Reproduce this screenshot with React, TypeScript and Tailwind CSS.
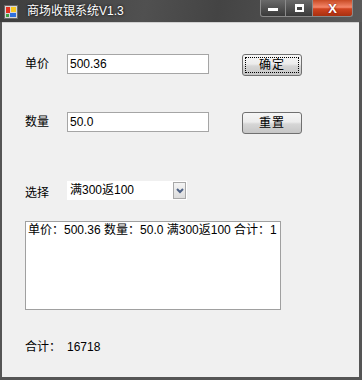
import React from "react";

const font = "font-['Liberation_Sans','Noto_Sans_CJK_SC',sans-serif]";

function AppIcon() {
  return (
    <svg width="14" height="14" viewBox="0 0 14 14">
      <rect x="0.5" y="0.5" width="13" height="13" fill="#d8d8d8" stroke="#6a6a6a" />
      <rect x="2" y="2" width="4" height="6" fill="#e03020" />
      <rect x="7" y="2" width="5" height="5" fill="#f8c820" />
      <rect x="6" y="8" width="6" height="4" fill="#3070e0" />
      <rect x="2" y="9" width="3" height="3" fill="#40a040" />
    </svg>
  );
}

function WinButton({ label, focused }: { label: string; focused?: boolean }) {
  return (
    <button className="relative w-[60px] h-[22px] rounded-[3px] border border-[#707070] bg-[linear-gradient(to_bottom,#f6f6f6_0%,#ececec_45%,#d6d6d6_55%,#c6c6c6_100%)] text-[12px] text-black flex items-center justify-center">
      {focused && (
        <span className="absolute inset-[2px] border border-dotted border-black" />
      )}
      <span className="relative tracking-[1px]">{label}</span>
    </button>
  );
}

function Field({ label, value, btn, focused }: { label: string; value: string; btn: string; focused?: boolean }) {
  return (
    <div className="flex items-start h-[22px]">
      <span className="w-[42px] h-[20px] leading-[20px] text-[12px]">{label}</span>
      <div className="w-[142px] h-[20px] border border-[#a5a5a5] bg-white px-[2px] leading-[18px] text-[12px]">
        {value}
      </div>
      <div className="ml-[33px]">
        <WinButton label={btn} focused={focused} />
      </div>
    </div>
  );
}

export default function App() {
  return (
    <div className={`w-[362px] h-[380px] flex flex-col bg-[#555555] ${font}`}>
      {/* Title bar */}
      <div className="h-[22px] flex items-start bg-[linear-gradient(100deg,#3e3e3e_0%,#505050_40%,#444444_60%,#5a5a5a_100%)]">
        <div className="mt-[5px] ml-[4px]">
          <AppIcon />
        </div>
        <span className="ml-[9px] mt-[4px] text-[12px] leading-[14px] text-white [text-shadow:0_0_3px_#000]">
          商场收银系统V1.3
        </span>
        <div className="ml-auto mr-[9px] flex h-[17px]">
          <div className="w-[26px] h-[17px] border border-[#8a8a8a] border-t-0 rounded-bl-[3px] bg-[linear-gradient(to_bottom,#6a6a6a,#3a3a3a)] flex items-center justify-center">
            <span className="w-[10px] h-[3px] bg-white mt-[2px]" />
          </div>
          <div className="w-[26px] h-[17px] border-b border-[#8a8a8a] bg-[linear-gradient(to_bottom,#6a6a6a,#3a3a3a)] flex items-center justify-center">
            <span className="w-[9px] h-[8px] border-2 border-white border-t-[3px] bg-[#444]" />
          </div>
          <div className="w-[41px] h-[17px] border border-[#8a8a8a] border-t-0 rounded-br-[3px] bg-[linear-gradient(to_bottom,#c84a24_0%,#f5876a_45%,#d04420_55%,#a83010_100%)] flex items-center justify-center">
            <span className="text-white font-bold text-[13px] leading-[13px] [text-shadow:0_0_2px_#600]">X</span>
          </div>
        </div>
      </div>

      {/* Client area */}
      <div className="flex-1 ml-[2px] mr-[3px] mb-[3px] border-t border-[#d0d0d0] bg-[#f0f0f0] pl-[23px] flex flex-col text-black">
        <div className="mt-[31px]">
          <Field label="单价" value="500.36" btn="确定" focused />
        </div>
        <div className="mt-[36px]">
          <Field label="数量" value="50.0" btn="重置" />
        </div>

        <div className="mt-[47px] flex items-center h-[19px]">
          <span className="w-[42px] text-[12px] mt-[4px]">选择</span>
          <div className="w-[120px] h-[19px] bg-white flex items-stretch">
            <span className="flex-1 pl-[3px] text-[12px] leading-[19px]">满300返100</span>
            <div className="w-[13px] my-[1px] mr-[1px] border border-[#a8a8a8] bg-[linear-gradient(to_bottom,#f4f4f4,#dcdcdc)] flex items-center justify-center">
              <svg width="8" height="6" viewBox="0 0 8 6">
                <path d="M1 1 L4 4 L7 1" stroke="#4d6185" strokeWidth="2" fill="none" />
              </svg>
            </div>
          </div>
        </div>

        <div className="mt-[21px] w-[256px] h-[89px] border border-[#a0a0a0] bg-white overflow-hidden">
          <div className="pl-[2px] pt-[1px] text-[12px] leading-[14px] whitespace-nowrap">
            单价：500.36 数量：50.0 满300返100 合计：1
          </div>
        </div>

        <div className="mt-[30px] flex text-[12px] leading-[14px]">
          <span className="w-[42px]">合计：</span>
          <span>16718</span>
        </div>
      </div>
    </div>
  );
}
